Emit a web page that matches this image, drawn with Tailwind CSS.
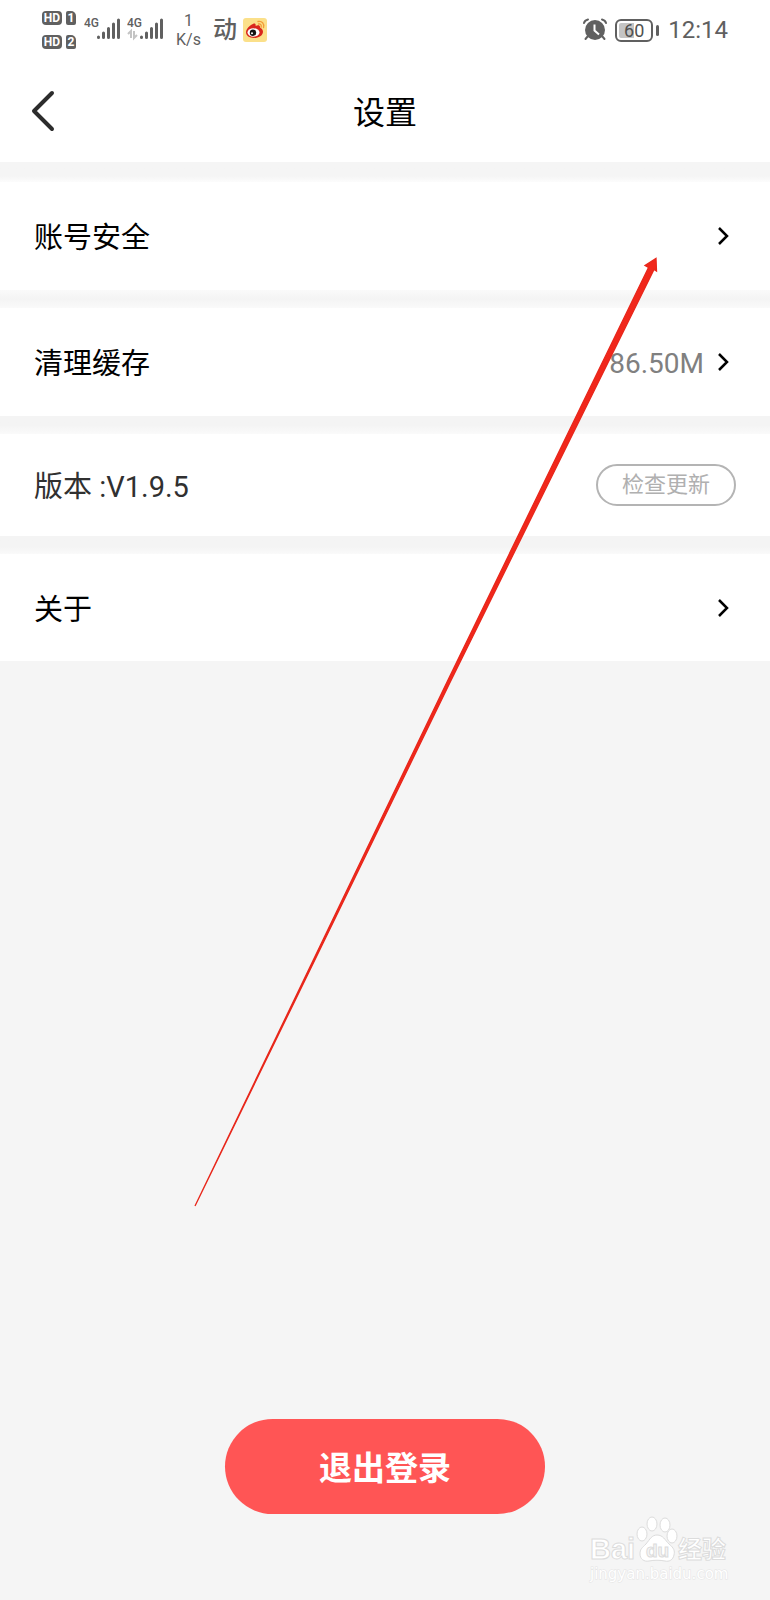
<!DOCTYPE html>
<html lang="zh-CN">
  <head>
    <meta charset="UTF-8" />
    <meta name="viewport" content="width=device-width, initial-scale=1.0" />
    <title>设置</title>
    <script src="https://cdn.jsdelivr.net/npm/@tailwindcss/browser@4"></script>
  </head>
  <body
    class="relative flex min-h-screen flex-col bg-[#f5f5f5] font-[Roboto,'Noto_Sans_CJK_SC',sans-serif] text-black"
  >
    <!-- Status bar -->
    <div
      class="flex h-[60px] items-center justify-between bg-white pr-[42px] pl-[42px] text-[#606060]"
    >
      <div class="flex items-center">
        <div class="flex flex-col gap-[10px] text-[12px] leading-[14px] font-bold text-white">
          <div class="flex gap-1">
            <span class="w-[20px] rounded-[4px] bg-[#606060] text-center">HD</span>
            <span class="w-[10px] rounded-[2px] rounded-tr-[5px] bg-[#606060] text-center">1</span>
          </div>
          <div class="flex gap-1">
            <span class="w-[20px] rounded-[4px] bg-[#606060] text-center">HD</span>
            <span class="w-[10px] rounded-[2px] rounded-tr-[5px] bg-[#606060] text-center">2</span>
          </div>
        </div>

        <!-- Signal -->
        <svg class="ml-2 h-8 w-[37px]" viewBox="0 0 37 32" fill="currentColor">
          <text x="0" y="13" font-size="12" font-weight="500">4G</text>
          <path
            d="M14.500 23.500v-.5M19.500 23.500V19M24.500 23.500v-9M29.500 23.500V10M34.500 23.500V6"
            stroke="currentColor"
            stroke-width="3"
            stroke-linecap="round"
          />
        </svg>
        <svg class="ml-[6px] h-8 w-[37px]" viewBox="0 0 37 32" fill="currentColor">
          <text x="0" y="13" font-size="12" font-weight="500">4G</text>
          <path d="M4 24v-7l-3 3M7 17v7l3-3" stroke="#c4c4c4" stroke-width="2" fill="none" />
          <path
            d="M14.500 23.500v-.5M19.500 23.500V19M24.500 23.500v-9M29.500 23.500V10M34.500 23.500V6"
            stroke="currentColor"
            stroke-width="3"
            stroke-linecap="round"
          />
        </svg>

        <div class="ml-3 text-center text-[16px] leading-[19px]">
          <div>1</div>
          <div>K/s</div>
        </div>

        <span class="ml-3 text-[24px] leading-6 font-medium">动</span>

        <!-- Weibo -->
        <svg class="ml-[6px] h-6 w-6" viewBox="0 0 24 24">
          <rect width="24" height="24" rx="3" fill="#fbe08a" />
          <path
            d="M10 6c2-1 3 0 2.600 2 2-1 4.600-1 4.400 1.200 0 .8 3 1.300 3 4.500C20 17.500 15.600 20 11 20c-4.700 0-8-2.200-8-5.700C3 11 7 7 10 6z"
            fill="#d9261c"
          />
          <ellipse cx="10.500" cy="14.500" rx="6" ry="4.200" fill="#fff" />
          <circle cx="10" cy="14.700" r="3.200" fill="#141414" />
          <circle cx="9" cy="15.200" r="1" fill="#fff" />
          <path
            d="M15 3.500c4-.8 6.500 2 5.500 6M15.500 6c2-.3 3.200 1 2.700 3"
            fill="none"
            stroke="#f29b38"
            stroke-width="1.300"
            stroke-linecap="round"
          />
        </svg>
      </div>

      <div class="flex items-center">
        <!-- Alarm -->
        <svg class="h-6 w-6" viewBox="0 0 24 24" fill="none" stroke="currentColor" stroke-width="2">
          <circle cx="12" cy="12" r="10" fill="currentColor" stroke="none" />
          <path d="M1 5c.5-2 2-3 4-3.500M23 5c-.5-2-2-3-4-3.500" stroke-linecap="round" />
          <path d="M5 18l-2.500 3M19 18l2.500 3" stroke-linecap="round" />
          <path d="M11.500 6.500v6l4.500 4" stroke="#fff" />
        </svg>

        <!-- Battery -->
        <div class="ml-2 flex items-center gap-[3px]">
          <div
            class="flex h-[23px] w-[38px] rounded-[6px] border-2 border-[#606060] p-[2px]"
          >
            <div
              class="w-full rounded-[2px] bg-linear-to-r from-[#c4c4c4] from-50% to-white to-50% text-center text-[18px] leading-[15px] text-[#505050]"
            >
              60
            </div>
          </div>
          <div class="h-[11px] w-[3px] rounded-xs bg-[#606060]"></div>
        </div>
        <time class="ml-[9px] text-[24px] leading-6">12:14</time>
      </div>
    </div>

    <!-- Header -->
    <header class="grid h-[102px] grid-cols-[1fr_auto_1fr] items-center bg-white px-[30px]">
      <a href="#" aria-label="返回" class="justify-self-start">
        <svg
          class="h-[42px] w-[26px]"
          viewBox="0 0 26 42"
          fill="none"
          stroke="#2c2c2c"
          stroke-width="4"
          stroke-linecap="round"
          stroke-linejoin="round"
        >
          <path d="M22 3L4 21l18 18" />
        </svg>
      </a>
      <h1 class="pt-1 text-[32px] leading-10">设置</h1>
    </header>

    <!-- Settings list -->
    <main class="flex grow flex-col">
      <div class="h-5 bg-linear-to-b from-[#f5f5f5] from-70% to-[#fcfcfc]"></div>
      <a
        href="#"
        class="flex h-[108px] items-center justify-between bg-white px-[34px] text-[29px] leading-10"
      >
        <span class="pt-1">账号安全</span>
        <svg class="h-6 w-6" viewBox="0 0 24 24" fill="none" stroke="#000" stroke-width="2.500">
          <path d="M7 4l8 8-8 8" />
        </svg>
      </a>
      <div
        class="h-[18px] bg-linear-to-b from-[#fafafa] via-[#f4f4f4] to-[#fafafa]"
      ></div>
      <a
        href="#"
        class="flex h-[108px] items-center justify-between bg-white px-[34px] text-[29px] leading-10"
      >
        <span class="pt-1">清理缓存</span>
        <span class="flex items-center gap-2">
          <span class="pt-1 text-[28px] text-[#808080]">86.50M</span>
          <svg class="h-6 w-6" viewBox="0 0 24 24" fill="none" stroke="#000" stroke-width="2.500">
            <path d="M7 4l8 8-8 8" />
          </svg>
        </span>
      </a>
      <div
        class="h-[18px] bg-linear-to-b from-[#f4f4f4] from-50% to-[#fafafa]"
      ></div>
      <div
        class="flex h-[102px] items-center justify-between bg-white px-[34px] text-[29px] leading-10 text-[#303030]"
      >
        <span class="pt-1">版本 :V1.9.5</span>
        <button
          type="button"
          class="h-[42px] w-[140px] rounded-full border-2 border-[#b4b4b4] text-[22px] leading-8 text-[#b0b0b0]"
        >
          检查更新
        </button>
      </div>
      <div
        class="h-[18px] bg-linear-to-b from-[#f4f4f4] from-60% to-[#fafafa]"
      ></div>
      <a
        href="#"
        class="flex h-[107px] items-center justify-between bg-white px-[34px] text-[29px] leading-10"
      >
        <span class="pt-1">关于</span>
        <svg class="h-6 w-6" viewBox="0 0 24 24" fill="none" stroke="#000" stroke-width="2.500">
          <path d="M7 4l8 8-8 8" />
        </svg>
      </a>

      <button
        type="button"
        class="mx-auto mt-auto mb-[86px] h-[95px] w-[320px] rounded-full bg-[#ff5555] pt-1 text-[33px] leading-10 font-bold text-white"
      >
        退出登录
      </button>
    </main>

    <!-- Pointer arrow -->
    <svg
      class="pointer-events-none absolute top-[256px] left-[193px] h-[952px] w-[466px]"
      viewBox="193 256 466 952"
    >
      <path
        d="M195 1206L447.500 681 648.500 267.500 645 265.500 656 258.500 656.500 271 654 269.500 450 682.500z"
        fill="#f1271b"
        stroke="#e8271b"
        stroke-width="1.300"
      />
    </svg>

    <!-- Watermark -->
    <svg
      class="pointer-events-none absolute right-[38px] bottom-[14px] h-[72px] w-[144px]"
      viewBox="0 0 144 72"
      fill="#fff"
      stroke="#dcdcdc"
      stroke-width="1"
      font-family="'Liberation Sans', 'Noto Sans CJK SC', sans-serif"
    >
      <text x="2" y="45" font-size="29" font-weight="700">Bai</text>
      <path
        d="M69 21c6 0 8 5 12 9 5 4 6 7 5 11-1 5-5 7-9 6-5-1-11-1-16 0-5 1-9-2-9-7s2-6 6-10c4-5 6-9 11-9z"
      />
      <ellipse cx="54" cy="20" rx="5" ry="7" />
      <ellipse cx="64" cy="10" rx="5" ry="7" />
      <ellipse cx="77" cy="11" rx="5" ry="7" />
      <ellipse cx="84" cy="22" rx="5" ry="7" />
      <text x="58" y="43" font-size="19" font-weight="700" fill="#f5f5f5">du</text>
      <text x="90" y="44" font-size="24" font-weight="700">经验</text>
      <text
        x="2"
        y="65"
        font-size="15"
        font-family="'DejaVu Sans', sans-serif"
        fill="#fff"
        stroke="#e4e4e4"
        paint-order="stroke"
      >
        jingyan.baidu.com
      </text>
    </svg>
  </body>
</html>
